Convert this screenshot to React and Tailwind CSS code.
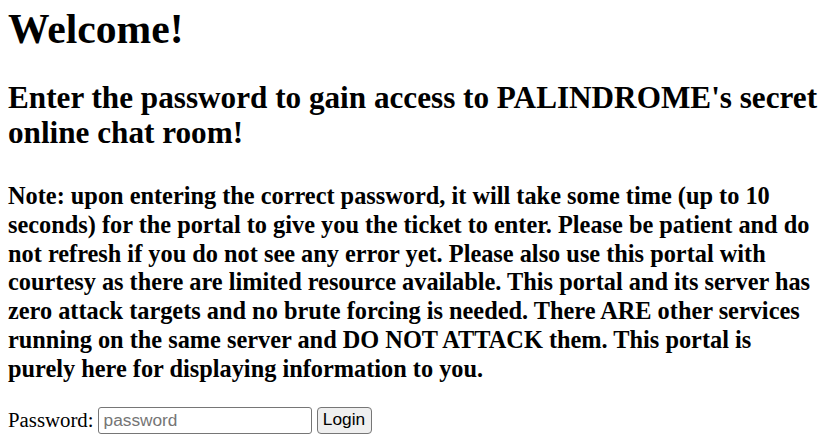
export default function App() {
  return (
    <div className="min-h-[440px] w-[828px] bg-white pl-[8px] pr-[4px] text-black" style={{ fontFamily: '"Liberation Serif", "Times New Roman", serif' }}>
      <h1 className="pt-[5px] text-[41.6px] font-bold leading-[48px]">Welcome!</h1>
      <h2 className="mt-[27px] text-[31.2px] font-bold leading-[35px]">
        Enter the password to gain access to PALINDROME's secret online chat room!
      </h2>
      <h3 className="mt-[32px] text-[24.34px] font-bold leading-[28.8px]">
        Note: upon entering the correct password, it will take some time (up to 10 seconds) for the portal to give you the ticket to enter. Please be patient and do not refresh if you do not see any error yet. Please also use this portal with courtesy as there are limited resource available. This portal and its server has zero attack targets and no brute forcing is needed. There ARE other services running on the same server and DO NOT ATTACK them. This portal is purely here for displaying information to you.
      </h3>
      <form className="mt-[23px] flex items-center" onSubmit={(e) => e.preventDefault()}>
        <label className="text-[20.8px] leading-[24px]">Password:</label>
        <input
          type="password"
          placeholder="password"
          className="ml-[4px] h-[27px] w-[214px] rounded-[3px] border border-[#767676] px-[5px] text-[17.3px] placeholder:text-[#757575]"
          style={{ fontFamily: '"Liberation Sans", Arial, sans-serif' }}
        />
        <button
          type="submit"
          className="ml-[5px] h-[27px] w-[55px] rounded-[4px] border border-[#767676] bg-[#efefef] text-[17.3px] leading-none"
          style={{ fontFamily: '"Liberation Sans", Arial, sans-serif' }}
        >
          Login
        </button>
      </form>
    </div>
  );
}
